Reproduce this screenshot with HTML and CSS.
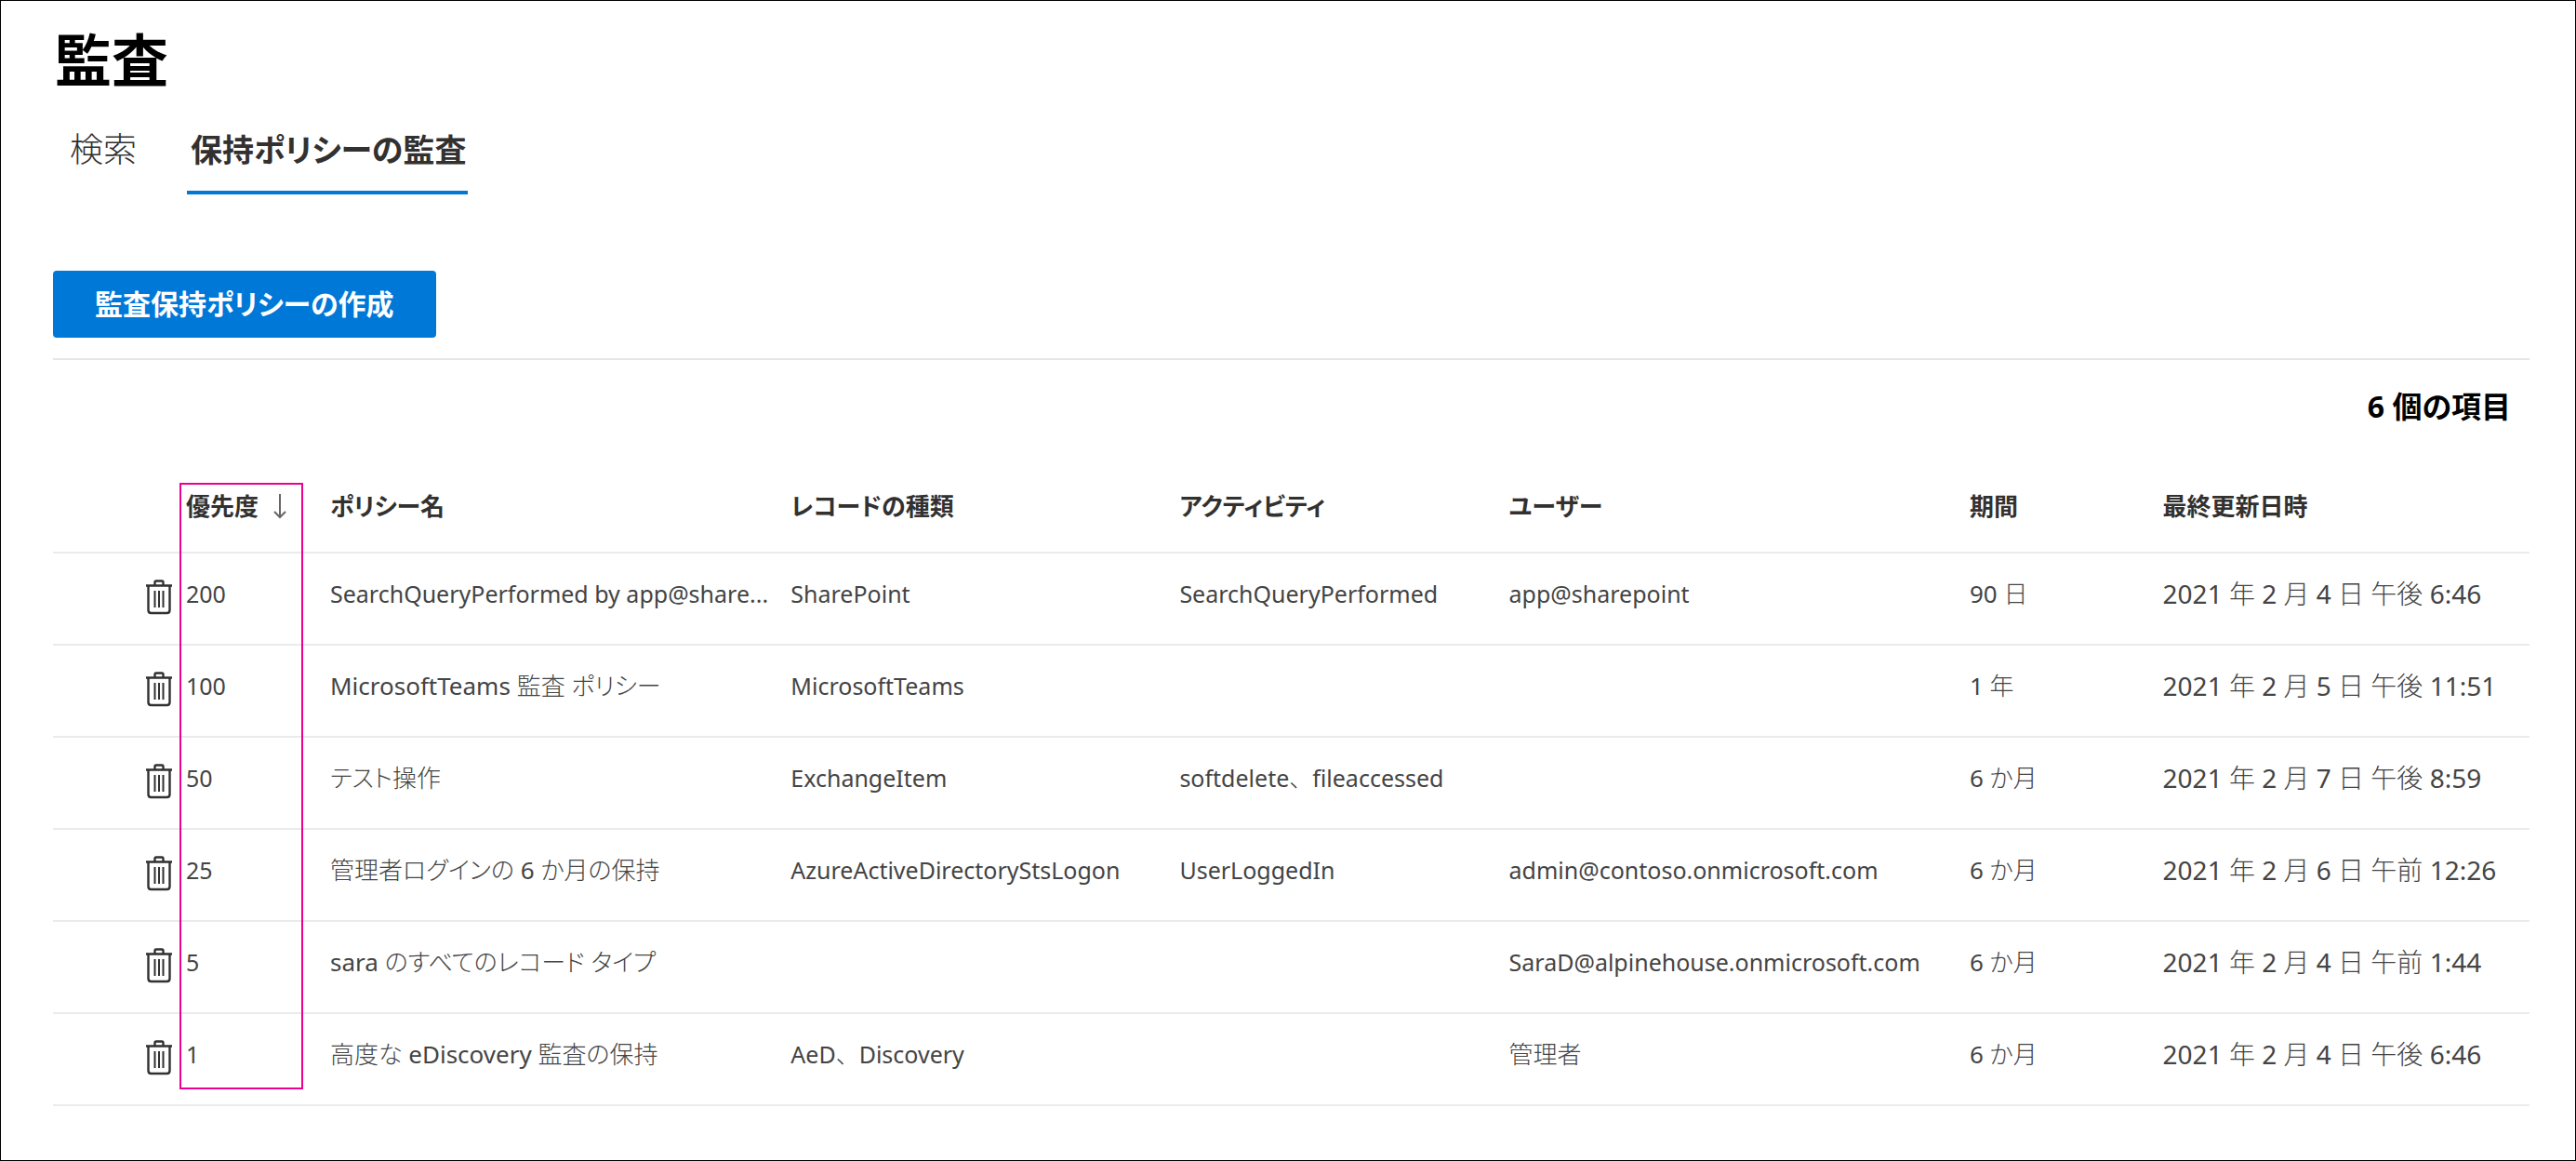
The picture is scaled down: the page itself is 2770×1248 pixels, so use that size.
FILE: index.html
```html
<!DOCTYPE html>
<html lang="ja">
<head>
<meta charset="utf-8">
<meta name="viewport" content="width=device-width, initial-scale=1">
<title>監査</title>
<link rel="stylesheet" href="styles.css">
</head>
<body>
<svg class="sprite" aria-hidden="true">
  <symbol id="trash" viewBox="0 0 30 38">
    <path d="M1 6.500H29M10.500 6V3Q10.500 1.500 12 1.500H18Q19.500 1.500 19.500 3V6M3.500 7V33Q3.500 36 6.500 36H23.500Q26.500 36 26.500 33V7" fill="none" stroke="currentColor" stroke-width="2.400"/>
    <path d="M10.500 12V30M15 12V30M19.500 12V30" fill="none" stroke="currentColor" stroke-width="2"/>
  </symbol>
</svg>
<main class="page">
  <h1 class="title">監査</h1>
  <nav class="tabs">
    <a class="tab" href="#search">検索</a>
    <a class="tab tab-active" href="#retention" aria-current="page">保持ポリシーの監査</a>
  </nav>
  <div class="toolbar">
    <button class="create" type="button">監査保持ポリシーの作成</button>
  </div>
  <p class="count">6 個の項目</p>
  <div class="list">
    <table class="policies">
      <colgroup>
        <col class="c-icon"><col class="c-priority"><col class="c-name"><col class="c-record"><col class="c-activity"><col class="c-user"><col class="c-period"><col>
      </colgroup>
      <thead>
        <tr>
          <td></td>
          <th scope="col"><span class="sort">優先度<svg class="arrow" viewBox="0 0 14 28" aria-hidden="true"><path d="M7 1V26M1 20L7 26L13 20" fill="none" stroke="currentColor" stroke-width="2"/></svg></span></th>
          <th scope="col">ポリシー名</th>
          <th scope="col">レコードの種類</th>
          <th scope="col">アクティビティ</th>
          <th scope="col">ユーザー</th>
          <th scope="col">期間</th>
          <th scope="col">最終更新日時</th>
        </tr>
      </thead>
      <tbody>
        <tr>
          <td class="icon"><button class="delete" type="button" aria-label="削除"><svg><use href="#trash"/></svg></button></td>
          <td class="latin">200</td>
          <td class="latin">SearchQueryPerformed by app@share...</td>
          <td class="latin">SharePoint</td>
          <td class="latin">SearchQueryPerformed</td>
          <td class="latin">app@sharepoint</td>
          <td>90 日</td>
          <td class="date">2021 年 2 月 4 日 午後 6:46</td>
        </tr>
        <tr>
          <td class="icon"><button class="delete" type="button" aria-label="削除"><svg><use href="#trash"/></svg></button></td>
          <td class="latin">100</td>
          <td>MicrosoftTeams 監査 ポリシー</td>
          <td class="latin">MicrosoftTeams</td>
          <td></td>
          <td></td>
          <td>1 年</td>
          <td class="date">2021 年 2 月 5 日 午後 11:51</td>
        </tr>
        <tr>
          <td class="icon"><button class="delete" type="button" aria-label="削除"><svg><use href="#trash"/></svg></button></td>
          <td class="latin">50</td>
          <td>テスト操作</td>
          <td class="latin">ExchangeItem</td>
          <td class="latin">softdelete、fileaccessed</td>
          <td></td>
          <td>6 か月</td>
          <td class="date">2021 年 2 月 7 日 午後 8:59</td>
        </tr>
        <tr>
          <td class="icon"><button class="delete" type="button" aria-label="削除"><svg><use href="#trash"/></svg></button></td>
          <td class="latin">25</td>
          <td>管理者ログインの 6 か月の保持</td>
          <td class="latin">AzureActiveDirectoryStsLogon</td>
          <td class="latin">UserLoggedIn</td>
          <td class="latin">admin@contoso.onmicrosoft.com</td>
          <td>6 か月</td>
          <td class="date">2021 年 2 月 6 日 午前 12:26</td>
        </tr>
        <tr>
          <td class="icon"><button class="delete" type="button" aria-label="削除"><svg><use href="#trash"/></svg></button></td>
          <td class="latin">5</td>
          <td>sara のすべてのレコード タイプ</td>
          <td></td>
          <td></td>
          <td class="latin">SaraD@alpinehouse.onmicrosoft.com</td>
          <td>6 か月</td>
          <td class="date">2021 年 2 月 4 日 午前 1:44</td>
        </tr>
        <tr>
          <td class="icon"><button class="delete" type="button" aria-label="削除"><svg><use href="#trash"/></svg></button></td>
          <td class="latin">1</td>
          <td>高度な eDiscovery 監査の保持</td>
          <td class="latin">AeD、Discovery</td>
          <td></td>
          <td>管理者</td>
          <td>6 か月</td>
          <td class="date">2021 年 2 月 4 日 午後 6:46</td>
        </tr>
      </tbody>
    </table>
    <div class="highlight"></div>
  </div>
</main>
</body>
</html>
```
FILE: styles.css
```css
* {
  box-sizing: border-box;
}

body {
  margin: 0;
  background: #fff;
  color: #444;
  font-family: "Noto Sans", "Noto Sans CJK JP", sans-serif;
  font-feature-settings: "palt";
}

.sprite {
  display: none;
}

.page {
  min-height: 100vh;
  padding: 28px 49px 40px 56px;
  border: 1px solid #000;
}

.title {
  margin: 0;
  padding-left: 2px;
  color: #000;
  font-size: 61px;
  line-height: 72px;
}

.tabs {
  display: flex;
  gap: 50px;
  margin-top: 34px;
  padding-left: 14px;
}

.tab {
  padding: 0 4px 18px;
  border-bottom: 4px solid transparent;
  color: #323130;
  font-size: 36px;
  font-weight: 300;
  line-height: 52px;
  text-decoration: none;
}

.tab-active {
  padding: 0 2px 18px 4px;
  border-color: #0078d7;
  font-size: 34px;
  font-weight: 700;
}

.toolbar {
  padding: 82px 0 22px;
  border-bottom: 2px solid #e6e6e6;
}

.create {
  height: 72px;
  padding: 0 45px 4px;
  border: 0;
  border-radius: 4px;
  background: #0078d7;
  color: #fff;
  font: inherit;
  font-size: 30px;
  font-weight: 700;
}

.count {
  margin: 0;
  padding: 28px 20px 0;
  color: #000;
  font-size: 32px;
  font-weight: 700;
  line-height: 44px;
  text-align: right;
}

.list {
  position: relative;
  margin-top: 40px;
}

.policies {
  width: 100%;
  border-collapse: collapse;
  table-layout: fixed;
}

.c-icon {
  width: 143px;
}

.c-priority {
  width: 155px;
}

.c-name {
  width: 18.6%;
}

.c-record {
  width: 15.7%;
}

.c-activity {
  width: 13.3%;
}

.c-user {
  width: 18.6%;
}

.c-period {
  width: 7.8%;
}

.policies tr {
  border-bottom: 2px solid #ebebeb;
}

.policies th,
.policies td {
  height: 99px;
  padding: 0 20px 12px 0;
  overflow: hidden;
  font-family: "Noto Sans", "Noto Sans CJK JP Light", "Noto Sans CJK JP", sans-serif;
  font-size: 26px;
  font-weight: 400;
  line-height: 40px;
  text-align: left;
  text-overflow: ellipsis;
  vertical-align: middle;
  white-space: nowrap;
}

.policies thead th,
.policies thead td {
  height: 95px;
  padding-bottom: 4px;
}

.policies th {
  color: #323130;
  font-family: inherit;
  font-weight: 700;
}

.policies td.latin {
  font-size: 25px;
  font-feature-settings: normal;
}

.policies td.date {
  padding-right: 0;
  font-size: 28px;
  font-feature-settings: normal;
}

.policies td.icon {
  padding: 0 14px 8px 0;
  text-align: right;
}

.sort {
  display: flex;
  align-items: center;
  gap: 16px;
}

.arrow {
  width: 14px;
  height: 28px;
  color: #666;
}

.delete {
  display: inline-flex;
  padding: 0;
  border: 0;
  background: none;
  color: #323130;
  vertical-align: middle;
}

.delete svg {
  width: 30px;
  height: 38px;
}

.highlight {
  position: absolute;
  top: 20px;
  bottom: 18px;
  left: 136px;
  width: 133px;
  border: 2px solid #ec008c;
  pointer-events: none;
}
```
